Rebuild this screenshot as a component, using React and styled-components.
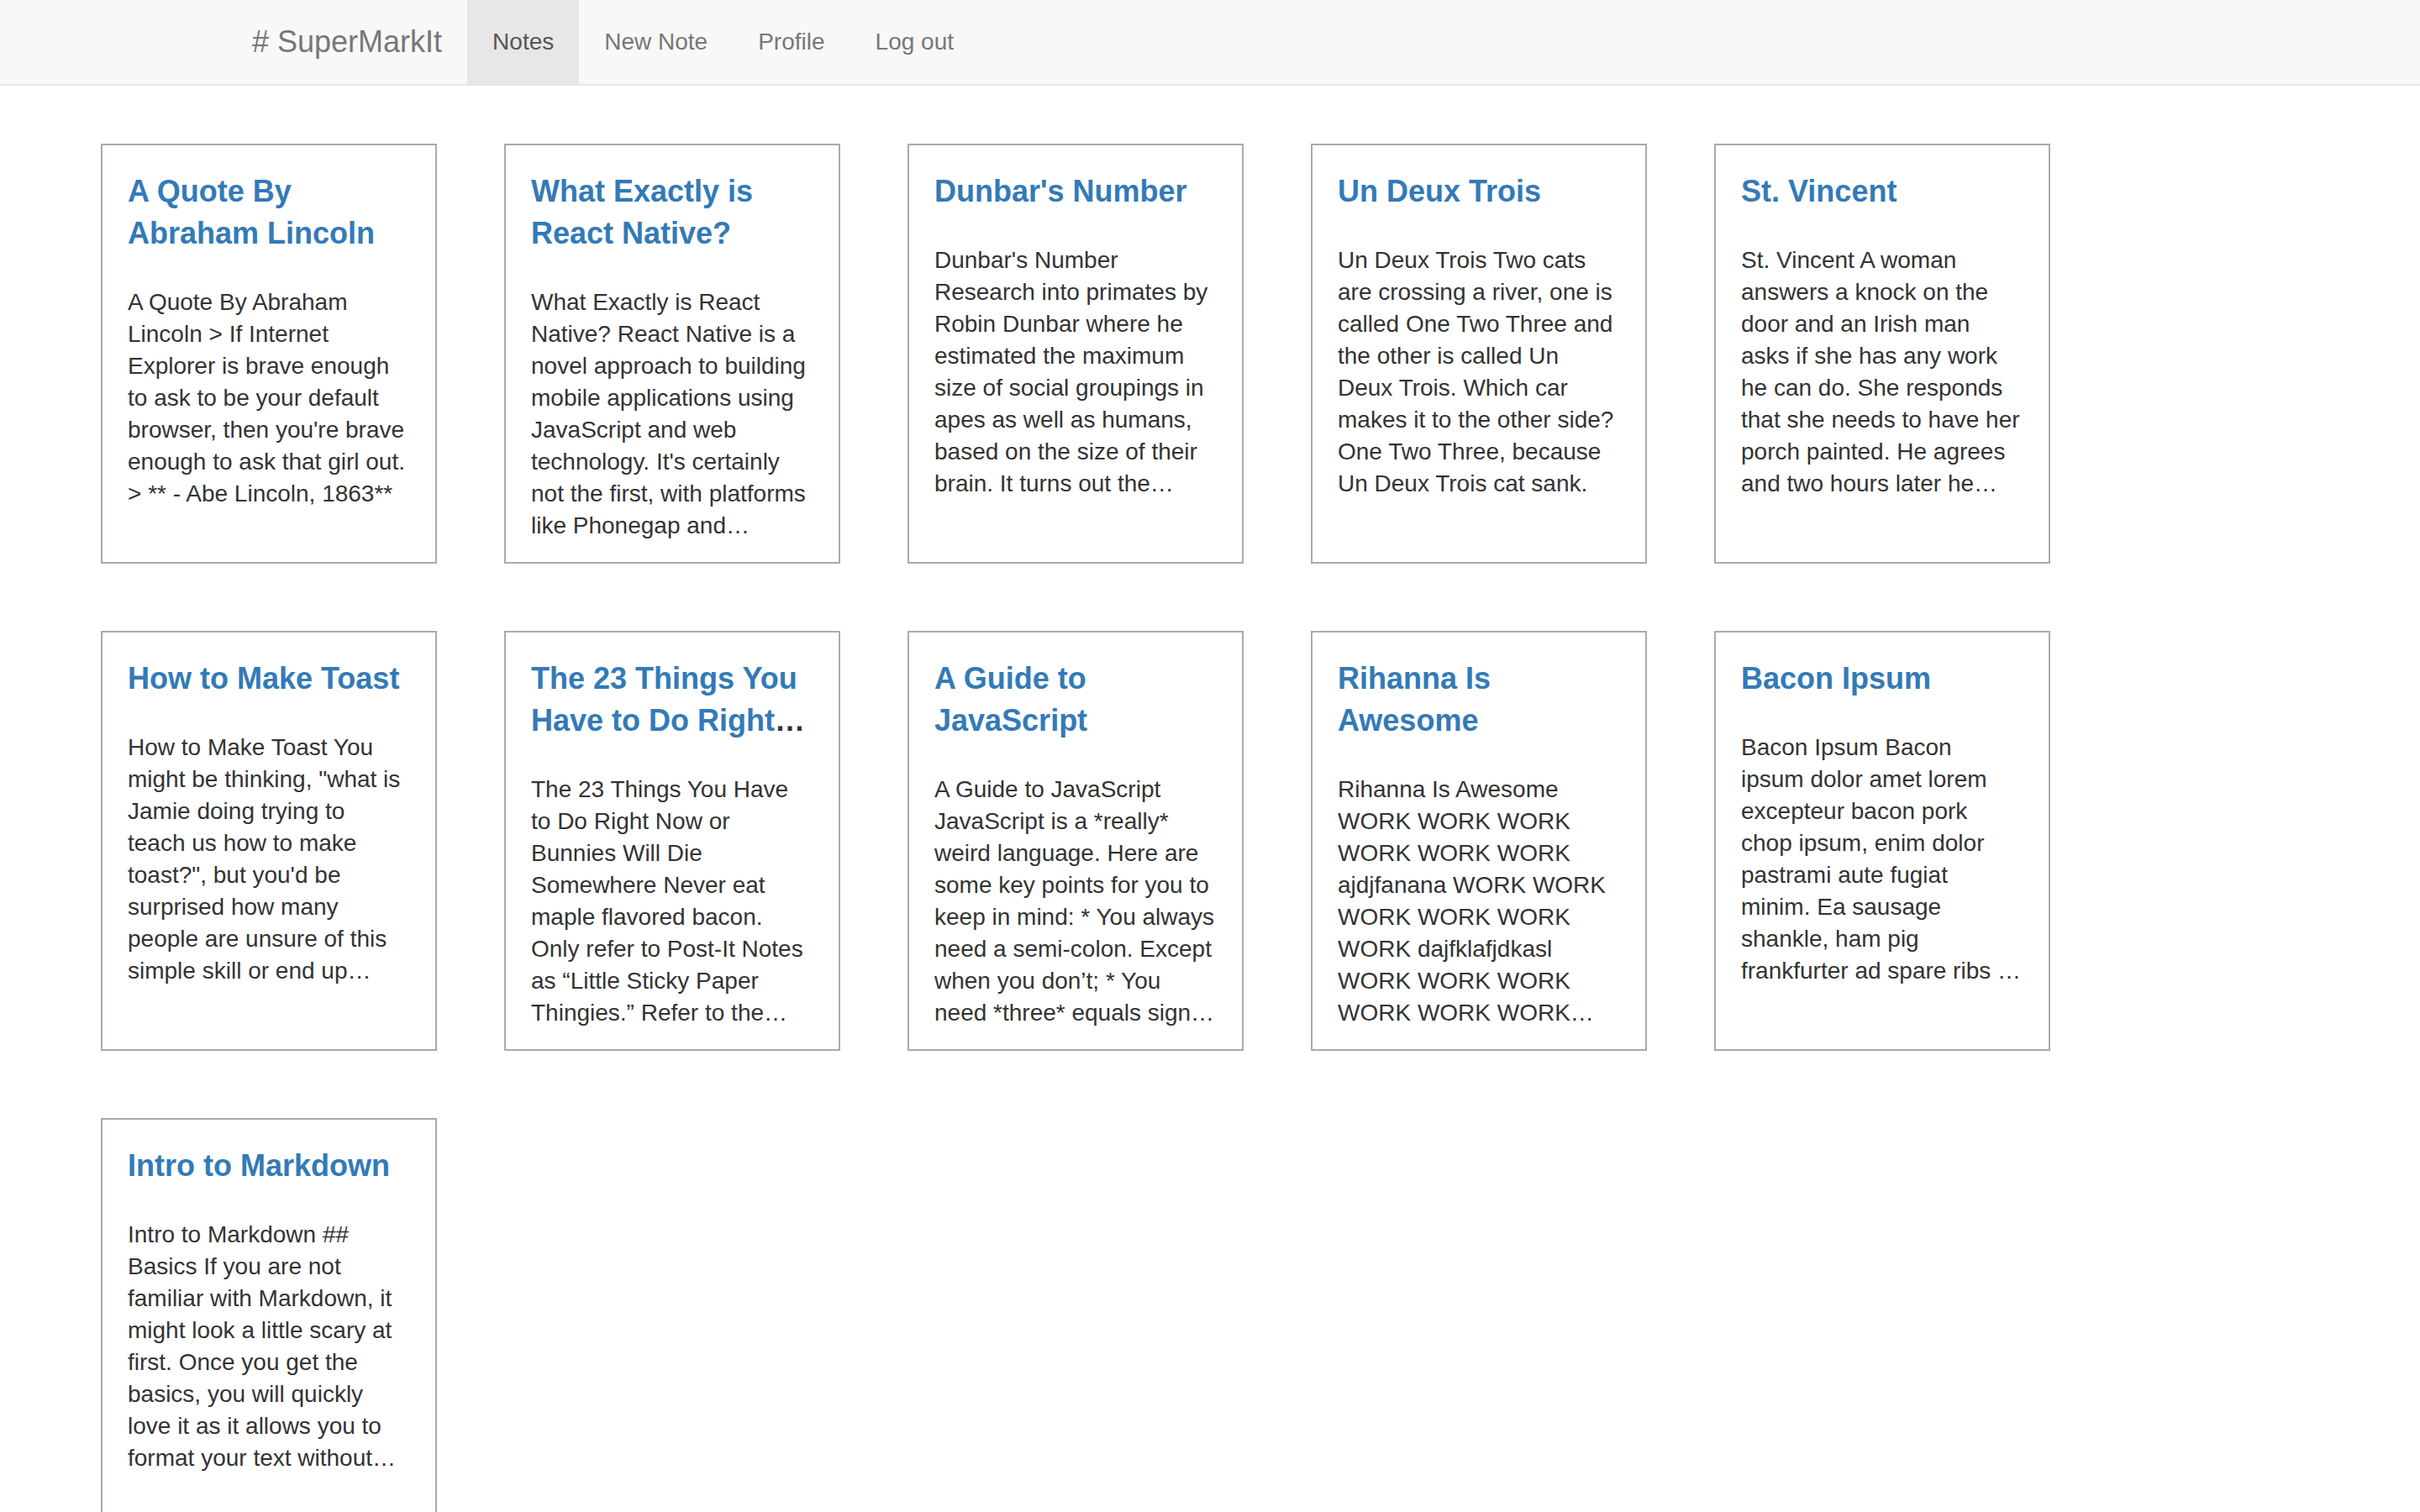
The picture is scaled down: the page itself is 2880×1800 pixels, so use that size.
import React from 'react';
import styled, { createGlobalStyle } from 'styled-components';

const GlobalStyle = createGlobalStyle`
  html, body {
    margin: 0;
    padding: 0;
    background: #fff;
  }
  body {
    font-family: 'Liberation Sans', Arial, sans-serif;
    color: #333;
  }
`;

const notes = [
  {
    title: ['A Quote By', 'Abraham Lincoln'],
    body: [
      'A Quote By Abraham',
      'Lincoln > If Internet',
      'Explorer is brave enough',
      'to ask to be your default',
      "browser, then you're brave",
      'enough to ask that girl out.',
      '> ** - Abe Lincoln, 1863**',
    ],
  },
  {
    title: ['What Exactly is', 'React Native?'],
    body: [
      'What Exactly is React',
      'Native? React Native is a',
      'novel approach to building',
      'mobile applications using',
      'JavaScript and web',
      "technology. It's certainly",
      'not the first, with platforms',
      'like Phonegap and…',
    ],
  },
  {
    title: ["Dunbar's Number"],
    body: [
      "Dunbar's Number",
      'Research into primates by',
      'Robin Dunbar where he',
      'estimated the maximum',
      'size of social groupings in',
      'apes as well as humans,',
      'based on the size of their',
      'brain. It turns out the…',
    ],
  },
  {
    title: ['Un Deux Trois'],
    body: [
      'Un Deux Trois Two cats',
      'are crossing a river, one is',
      'called One Two Three and',
      'the other is called Un',
      'Deux Trois. Which car',
      'makes it to the other side?',
      'One Two Three, because',
      'Un Deux Trois cat sank.',
    ],
  },
  {
    title: ['St. Vincent'],
    body: [
      'St. Vincent A woman',
      'answers a knock on the',
      'door and an Irish man',
      'asks if she has any work',
      'he can do. She responds',
      'that she needs to have her',
      'porch painted. He agrees',
      'and two hours later he…',
    ],
  },
  {
    title: ['How to Make Toast'],
    body: [
      'How to Make Toast You',
      'might be thinking, "what is',
      'Jamie doing trying to',
      'teach us how to make',
      'toast?", but you\'d be',
      'surprised how many',
      'people are unsure of this',
      'simple skill or end up…',
    ],
  },
  {
    title: ['The 23 Things You', 'Have to Do Right'],
    clipped: true,
    body: [
      'The 23 Things You Have',
      'to Do Right Now or',
      'Bunnies Will Die',
      'Somewhere Never eat',
      'maple flavored bacon.',
      'Only refer to Post-It Notes',
      'as “Little Sticky Paper',
      'Thingies.” Refer to the…',
    ],
  },
  {
    title: ['A Guide to', 'JavaScript'],
    body: [
      'A Guide to JavaScript',
      'JavaScript is a *really*',
      'weird language. Here are',
      'some key points for you to',
      'keep in mind: * You always',
      'need a semi-colon. Except',
      'when you don’t; * You',
      'need *three* equals sign…',
    ],
  },
  {
    title: ['Rihanna Is', 'Awesome'],
    body: [
      'Rihanna Is Awesome',
      'WORK WORK WORK',
      'WORK WORK WORK',
      'ajdjfanana WORK WORK',
      'WORK WORK WORK',
      'WORK dajfklafjdkasl',
      'WORK WORK WORK',
      'WORK WORK WORK…',
    ],
  },
  {
    title: ['Bacon Ipsum'],
    body: [
      'Bacon Ipsum Bacon',
      'ipsum dolor amet lorem',
      'excepteur bacon pork',
      'chop ipsum, enim dolor',
      'pastrami aute fugiat',
      'minim. Ea sausage',
      'shankle, ham pig',
      'frankfurter ad spare ribs …',
    ],
  },
  {
    title: ['Intro to Markdown'],
    body: [
      'Intro to Markdown ##',
      'Basics If you are not',
      'familiar with Markdown, it',
      'might look a little scary at',
      'first. Once you get the',
      'basics, you will quickly',
      'love it as it allows you to',
      'format your text without…',
    ],
  },
];

function App() {
  return (
    <>
      <GlobalStyle />
      <Navbar>
        <NavInner>
          <Brand href="#">#&nbsp;SuperMarkIt</Brand>
          <NavList>
            <NavItem $active>Notes</NavItem>
            <NavItem>New Note</NavItem>
            <NavItem>Profile</NavItem>
            <NavItem>Log out</NavItem>
          </NavList>
        </NavInner>
      </Navbar>
      <NoteGrid>
        {notes.map((note, i) => (
          <NoteCard key={i}>
            <NoteTitle>
              {note.title.map((line, j) => (
                <Line key={j}>
                  <TitleLink href="#">{line}</TitleLink>
                  {note.clipped && j === note.title.length - 1 && '…'}
                </Line>
              ))}
            </NoteTitle>
            <NoteBody>
              {note.body.map((line, j) => (
                <Line key={j}>{line}</Line>
              ))}
            </NoteBody>
          </NoteCard>
        ))}
      </NoteGrid>
    </>
  );
}

const Navbar = styled.nav`
  height: 100px;
  background-color: #f8f8f8;
  border-bottom: 2px solid #e7e7e7;
`;

const NavInner = styled.div`
  display: flex;
  align-items: stretch;
  height: 100%;
  padding-left: 270px;
`;

const Brand = styled.a`
  display: block;
  padding: 30px;
  font-size: 36px;
  line-height: 40px;
  color: #777;
  text-decoration: none;
`;

const NavList = styled.div`
  display: flex;
`;

const NavItem = styled.a`
  display: block;
  padding: 30px;
  font-size: 28px;
  line-height: 40px;
  color: ${(p) => (p.$active ? '#555' : '#777')};
  background-color: ${(p) => (p.$active ? '#e7e7e7' : 'transparent')};
  cursor: pointer;
`;

const NoteGrid = styled.main`
  display: grid;
  grid-template-columns: repeat(5, 400px);
  gap: 80px;
  padding: 69px 0 0 120px;
`;

const NoteCard = styled.div`
  box-sizing: border-box;
  height: 500px;
  padding: 30px;
  border: 2px solid #aaa;
  overflow: hidden;
`;

const NoteTitle = styled.h4`
  margin: 0 0 38px;
  font-size: 36px;
  line-height: 50px;
  font-weight: bold;
  color: #333;
`;

const TitleLink = styled.a`
  color: #337ab7;
  text-decoration: none;
`;

const NoteBody = styled.p`
  margin: 0;
  font-size: 28px;
  line-height: 38px;
  color: #333;
`;

const Line = styled.span`
  display: block;
  white-space: nowrap;
`;

export default App;
